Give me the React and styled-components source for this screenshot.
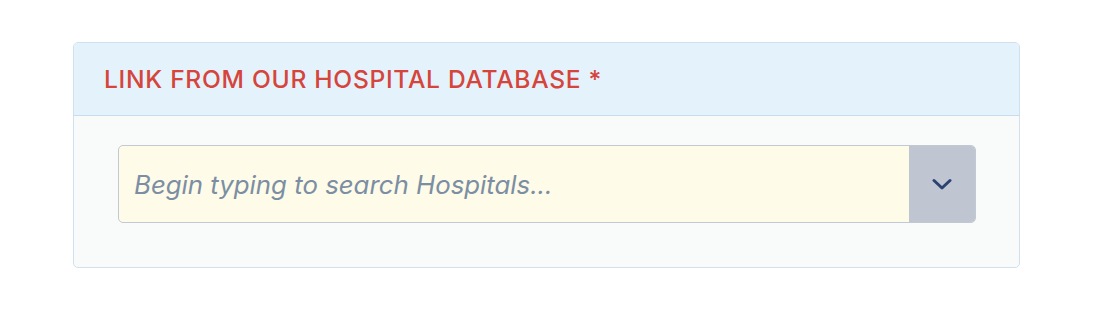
import React, { useState } from 'react';
import styled, { createGlobalStyle } from 'styled-components';

const GlobalStyle = createGlobalStyle`
  body {
    margin: 0;
    background: #ffffff;
    font-family: Inter, "Liberation Sans", sans-serif;
  }
`;

const Page = styled.div`
  padding: 42px 78px 0 73px;
`;

const Card = styled.section`
  border: 1px solid #cfe0ef;
  border-radius: 5px;
  overflow: hidden;
  background-color: #f9fafa;
`;

const Header = styled.div`
  height: 72px;
  display: flex;
  align-items: center;
  padding: 0 30px;
  background-color: #e4f2fc;
  border-bottom: 1px solid #c9dcee;
`;

const Title = styled.h2`
  margin: 0;
  font-size: 24.6px;
  font-weight: 500;
  letter-spacing: 0.7px;
  color: #d5453b;
`;

const Body = styled.div`
  padding: 29px 43px 44px 44px;
`;

const SearchBox = styled.div`
  display: flex;
  height: 76px;
  border: 1px solid #c3c9d2;
  border-radius: 5px;
  overflow: hidden;
  background-color: #fefbe8;
`;

const Input = styled.input`
  flex: 1;
  border: none;
  outline: none;
  background: transparent;
  padding: 0 15px;
  font-family: Inter, "Liberation Sans", sans-serif;
  font-size: 25.8px;
  color: #333;

  &::placeholder {
    color: #7b8ea3;
    font-style: italic;
  }
`;

const Toggle = styled.button`
  width: 66px;
  border: none;
  background-color: #bfc6d2;
  display: flex;
  align-items: center;
  justify-content: center;
  cursor: pointer;
  padding: 0;
`;

const Chevron = () => (
  <svg width="20" height="12" viewBox="0 0 20 12" fill="none">
    <path d="M2 2.5l8 7.5 8-7.5" stroke="#2b4272" strokeWidth="3" strokeLinecap="round" strokeLinejoin="round" />
  </svg>
);

const App = () => {
  const [query, setQuery] = useState('');

  return (
    <Page>
      <GlobalStyle />
      <Card>
        <Header>
          <Title>LINK FROM OUR HOSPITAL DATABASE *</Title>
        </Header>
        <Body>
          <SearchBox>
            <Input
              type="text"
              value={query}
              placeholder="Begin typing to search Hospitals..."
              onChange={(e) => setQuery(e.target.value)}
            />
            <Toggle type="button" aria-label="Show hospitals">
              <Chevron />
            </Toggle>
          </SearchBox>
        </Body>
      </Card>
    </Page>
  );
};

export default App;
